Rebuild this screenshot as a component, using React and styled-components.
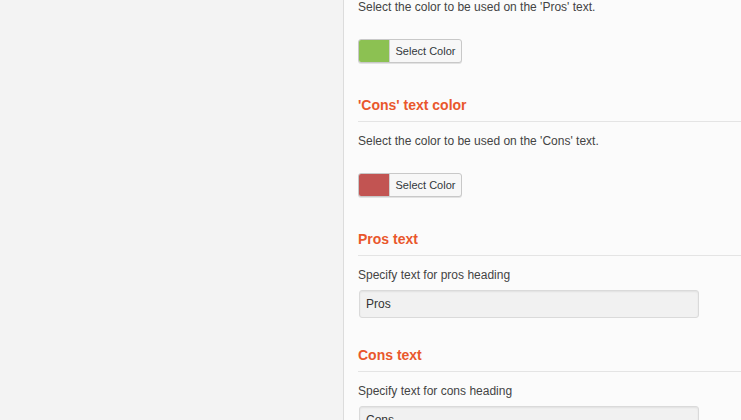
import React from 'react';
import styled, { createGlobalStyle } from 'styled-components';

const GlobalStyle = createGlobalStyle`
  html, body {
    margin: 0;
    padding: 0;
    height: 100%;
    overflow: hidden;
    background: #f3f3f3;
    font-family: "Liberation Sans", Arial, sans-serif;
  }
`;

export default function App() {
  return (
    <>
      <GlobalStyle />
      <Page>
        <Sidebar />
        <Panel>
          <Content>
            <Field>
              <Description>Select the color to be used on the 'Pros' text.</Description>
              <ColorButton swatch="#8cc152" />
            </Field>

            <Section $after="button">
              <Heading>'Cons' text color</Heading>
              <Field>
                <Description>Select the color to be used on the 'Cons' text.</Description>
                <ColorButton swatch="#c25452" />
              </Field>
            </Section>

            <Section $after="button">
              <Heading>Pros text</Heading>
              <Field>
                <Description>Specify text for pros heading</Description>
                <TextInput defaultValue="Pros" />
              </Field>
            </Section>

            <Section $after="input">
              <Heading>Cons text</Heading>
              <Field>
                <Description>Specify text for cons heading</Description>
                <TextInput defaultValue="Cons" />
              </Field>
            </Section>
          </Content>
        </Panel>
      </Page>
    </>
  );
}

function ColorButton({ swatch }) {
  return (
    <PickerButton type="button">
      <Swatch style={{ background: swatch }} />
      <PickerLabel>Select Color</PickerLabel>
    </PickerButton>
  );
}

const Page = styled.div`
  display: flex;
  height: 420px;
  overflow: hidden;
`;

const Sidebar = styled.div`
  width: 343px;
  flex: none;
  background: #f3f3f3;
  border-right: 1px solid #dcdcdc;
`;

const Panel = styled.div`
  flex: 1;
  background: #fbfbfb;
  padding-left: 14px;
`;

const Content = styled.div`
  margin-top: -2px;
`;

const Section = styled.section`
  margin-top: ${(p) => (p.$after === 'input' ? '27px' : '32px')};
`;

const Heading = styled.h3`
  margin: 0;
  font-size: 14px;
  line-height: 20px;
  font-weight: bold;
  color: #e9572c;
  padding-bottom: 6px;
  border-bottom: 1px solid #e4e4e4;
`;

const Field = styled.div`
  display: flex;
  flex-direction: column;
  align-items: flex-start;
  ${Section} & {
    padding-top: 10px;
  }
`;

const Description = styled.p`
  margin: 0;
  font-size: 12px;
  line-height: 18px;
  color: #444;
`;

const PickerButton = styled.button`
  display: flex;
  align-items: stretch;
  height: 24px;
  width: 104px;
  margin-top: 23px;
  padding: 0;
  border: 1px solid #c8c8c8;
  border-radius: 3px;
  background: #f7f7f7;
  box-shadow: 0 1px 0 #e2e2e2;
  overflow: hidden;
  cursor: pointer;
  font-family: inherit;
`;

const Swatch = styled.span`
  width: 30px;
  flex: none;
  border-right: 1px solid #d0d0d0;
`;

const PickerLabel = styled.span`
  flex: 1;
  display: flex;
  align-items: center;
  justify-content: center;
  font-size: 11px;
  color: #32373c;
`;

const TextInput = styled.input`
  box-sizing: border-box;
  width: 340px;
  height: 28px;
  margin: 6px 0 0 1px;
  padding: 0 6px;
  border: 1px solid #dadada;
  border-radius: 3px;
  background: #f1f1f1;
  box-shadow: inset 0 1px 2px rgba(0, 0, 0, 0.07);
  font-family: inherit;
  font-size: 12px;
  color: #333;
  outline: none;
`;
